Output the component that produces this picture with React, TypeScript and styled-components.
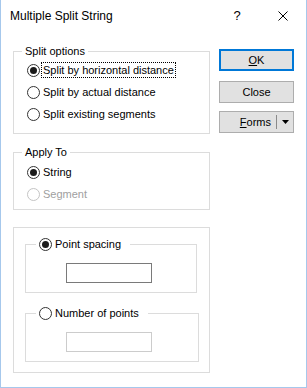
import React from "react";
import styled, { createGlobalStyle } from "styled-components";

const GlobalStyle = createGlobalStyle`
  html, body {
    margin: 0;
    padding: 0;
    background: #ffffff;
  }
  body {
    font-family: "Liberation Sans", Arial, sans-serif;
    font-size: 11px;
    color: #000000;
  }
`;

const Window = styled.div`
  box-sizing: border-box;
  width: 307px;
  height: 388px;
  background: #ffffff;
  border: 1px solid #a6c8ec;
  border-top: none;
  display: flex;
  flex-direction: column;
`;

const TitleBar = styled.div`
  height: 31px;
  display: flex;
  align-items: center;
  padding-left: 9px;
  font-size: 12px;
`;

const Title = styled.div`
  flex: 1;
  color: #000000;
`;

const TitleButton = styled.div`
  width: 46px;
  height: 31px;
  display: flex;
  align-items: center;
  justify-content: center;
  font-size: 13px;
`;

const Body = styled.div`
  display: flex;
  padding: 13px 0 0 12px;
`;

const LeftColumn = styled.div`
  width: 197px;
  display: flex;
  flex-direction: column;
`;

const ButtonColumn = styled.div`
  display: flex;
  flex-direction: column;
  margin-left: 9px;
  padding-top: 5px;
`;

const GroupBox = styled.fieldset<{ $mt?: number; $pt?: number; $pb?: number }>`
  margin: ${(p) => p.$mt ?? 0}px 0 0 0;
  padding: ${(p) => p.$pt ?? 1}px 8px ${(p) => p.$pb ?? 8}px 8px;
  border: 1px solid #dcdcdc;
  min-width: 0;
`;

const Legend = styled.legend`
  padding: 0 3px;
  line-height: 14px;
  height: 14px;
`;

const RadioList = styled.div`
  display: flex;
  flex-direction: column;
  padding-left: 5px;
`;

const RadioRow = styled.label<{ $disabled?: boolean }>`
  display: flex;
  align-items: center;
  height: 22px;
  color: ${(p) => (p.$disabled ? "#a0a0a0" : "#000000")};
`;

const RadioCircle = styled.span<{ $checked?: boolean; $disabled?: boolean }>`
  box-sizing: border-box;
  width: 13px;
  height: 13px;
  border-radius: 50%;
  border: 1px solid ${(p) => (p.$disabled ? "#c4c4c4" : "#333333")};
  background: #ffffff;
  display: flex;
  align-items: center;
  justify-content: center;
  flex-shrink: 0;
  &::after {
    content: "";
    width: 7px;
    height: 7px;
    border-radius: 50%;
    background: #1b1b1b;
    display: ${(p) => (p.$checked ? "block" : "none")};
  }
`;

const RadioText = styled.span<{ $focused?: boolean }>`
  margin-left: 2px;
  padding: 0 1px;
  line-height: 14px;
  outline: ${(p) => (p.$focused ? "1px dotted #000000" : "none")};
`;

const OuterBox = styled.div`
  margin-top: 17px;
  border: 1px solid #dcdcdc;
  padding: 9px 12px 10px 11px;
  display: flex;
  flex-direction: column;
`;

const InnerBox = styled.fieldset<{ $mt?: number; $mr?: number }>`
  margin: ${(p) => p.$mt ?? 0}px ${(p) => p.$mr ?? 0}px 0 0;
  padding: 0 8px 9px 10px;
  border: 1px solid #dcdcdc;
  min-width: 0;
`;

const RadioLegend = styled.legend`
  padding: 0 8px 0 3px;
  line-height: 14px;
  height: 14px;
  display: flex;
  align-items: center;
`;

const TextInput = styled.div<{ $disabled?: boolean }>`
  box-sizing: border-box;
  margin: 12px 0 0 30px;
  width: 86px;
  height: 20px;
  background: #ffffff;
  border: 1px solid ${(p) => (p.$disabled ? "#cccccc" : "#7a7a7a")};
`;

const Button = styled.div<{ $default?: boolean; $mt?: number }>`
  box-sizing: border-box;
  width: 75px;
  height: 22px;
  margin-top: ${(p) => p.$mt ?? 0}px;
  background: #e1e1e1;
  border: ${(p) => (p.$default ? "2px solid #0078d7" : "1px solid #adadad")};
  display: flex;
  align-items: center;
  justify-content: center;
`;

const SplitButton = styled(Button)`
  justify-content: flex-start;
`;

const SplitLabel = styled.span`
  flex: 1;
  text-align: right;
  padding-right: 5px;
`;

const SplitDivider = styled.span`
  width: 1px;
  height: 14px;
  background: #8a8a8a;
`;

const SplitArrow = styled.span`
  width: 16px;
  display: flex;
  align-items: center;
  justify-content: center;
`;

type RadioProps = {
  label: string;
  checked?: boolean;
  disabled?: boolean;
  focused?: boolean;
};

const Radio = ({ label, checked, disabled, focused }: RadioProps) => (
  <RadioRow $disabled={disabled}>
    <RadioCircle $checked={checked} $disabled={disabled} />
    <RadioText $focused={focused}>{label}</RadioText>
  </RadioRow>
);

export default function App() {
  return (
    <>
      <GlobalStyle />
      <Window>
        <TitleBar>
          <Title>Multiple Split String</Title>
          <TitleButton>?</TitleButton>
          <TitleButton>
            <svg width="10" height="10" viewBox="0 0 10 10">
              <path d="M0.5 0.5 L9.5 9.5 M9.5 0.5 L0.5 9.5" stroke="#000" strokeWidth="1" fill="none" />
            </svg>
          </TitleButton>
        </TitleBar>
        <Body>
          <LeftColumn>
            <GroupBox>
              <Legend>Split options</Legend>
              <RadioList>
                <Radio label="Split by horizontal distance" checked focused />
                <Radio label="Split by actual distance" />
                <Radio label="Split existing segments" />
              </RadioList>
            </GroupBox>
            <GroupBox $mt={11} $pt={2} $pb={4}>
              <Legend>Apply To</Legend>
              <RadioList>
                <Radio label="String" checked />
                <Radio label="Segment" disabled />
              </RadioList>
            </GroupBox>
            <OuterBox>
              <InnerBox>
                <RadioLegend>
                  <RadioCircle $checked />
                  <RadioText>Point spacing</RadioText>
                </RadioLegend>
                <TextInput />
              </InnerBox>
              <InnerBox $mt={13} $mr={-2}>
                <RadioLegend>
                  <RadioCircle />
                  <RadioText>Number of points</RadioText>
                </RadioLegend>
                <TextInput $disabled />
              </InnerBox>
            </OuterBox>
          </LeftColumn>
          <ButtonColumn>
            <Button $default>
              <span>
                <u>O</u>K
              </span>
            </Button>
            <Button $mt={10}>Close</Button>
            <SplitButton $mt={8}>
              <SplitLabel>
                <u>F</u>orms
              </SplitLabel>
              <SplitDivider />
              <SplitArrow>
                <svg width="7" height="4" viewBox="0 0 7 4">
                  <path d="M0 0 H7 L3.5 4 Z" fill="#000" />
                </svg>
              </SplitArrow>
            </SplitButton>
          </ButtonColumn>
        </Body>
      </Window>
    </>
  );
}
